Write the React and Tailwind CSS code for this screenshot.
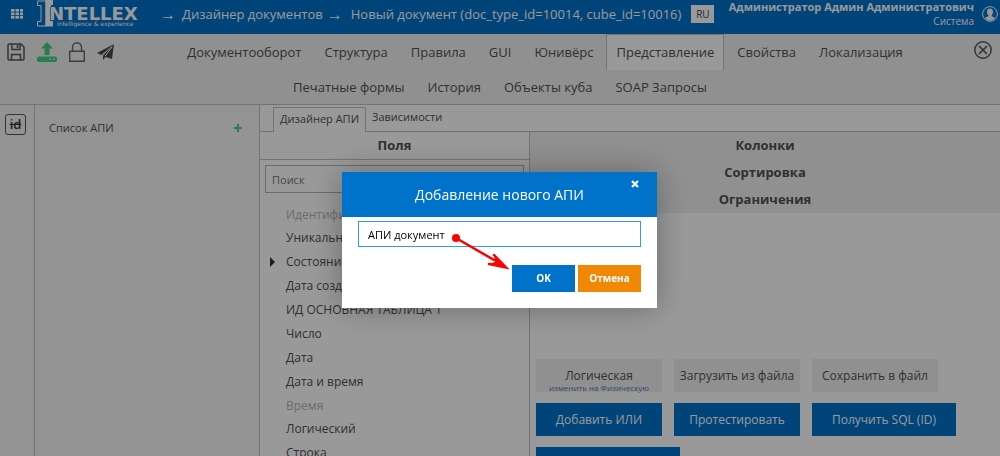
import React, { useState } from 'react';

const mainTabs = ['Документооборот', 'Структура', 'Правила', 'GUI', 'Юнивёрс', 'Представление', 'Свойства', 'Локализация'];
const subTabs = ['Печатные формы', 'История', 'Объекты куба', 'SOAP Запросы'];

const fields = [
    { name: 'Идентификатор', disabled: true },
    { name: 'Уникальный идентификатор' },
    { name: 'Состояние', expandable: true },
    { name: 'Дата создания' },
    { name: 'ИД ОСНОВНАЯ ТАБЛИЦА 1' },
    { name: 'Число' },
    { name: 'Дата' },
    { name: 'Дата и время' },
    { name: 'Время', disabled: true },
    { name: 'Логический' },
    { name: 'Строка' }
];

const sections = ['Колонки', 'Сортировка', 'Ограничения'];

function Logo() {
    return (
        <svg width="104" height="28" viewBox="0 0 104 28" role="img" aria-label="Intellex">
            <path d="M1.500 1h8.500v25H1.500v-4.500h3.500v-16H1.500z" fill="#0072ca" stroke="#fff" />
            <path d="M9.500 0H17v5h-2v2h-1v14h3v5.500H9.500z" fill="#fff" />
            <text x="13" y="20" fontSize="18" fontWeight="700" fill="#fff" fontFamily="'DejaVu Sans', sans-serif">NTELLEX</text>
            <text x="21" y="26" fontSize="6" fill="#fff" fontFamily="'DejaVu Sans', sans-serif">intelligence &amp; experience</text>
        </svg>
    );
}

function SaveIcon() {
    return (
        <svg width="18" height="18" viewBox="0 0 18 18" fill="none" stroke="#555" strokeWidth="1.5">
            <path d="M1 2.500Q1 1 2.500 1H14l3 3v11.500q0 1.500-1.500 1.500h-13Q1 17 1 15.500z" />
            <path d="M5 1v5.500h8V1M4.500 17v-5.500h9V17" />
            <path d="M10.500 2v3" />
        </svg>
    );
}

function UploadIcon() {
    return (
        <svg width="20" height="20" viewBox="0 0 20 20" fill="#43cf83">
            <path d="M10 0l6 6.500h-3.500V13h-5V6.500H4z" />
            <path fillRule="evenodd" d="M2.500 14.500h15a2.500 2.500 0 0 1 0 5.500h-15a2.500 2.500 0 0 1 0-5.500zM12.500 16.500v1.500H14v-1.500zM16 16.500v1.500h1.500v-1.500z" />
        </svg>
    );
}

function LockIcon() {
    return (
        <svg width="16" height="20" viewBox="0 0 16 20" fill="none" stroke="#666" strokeWidth="1.400">
            <path d="M.7 9.200h14.600v10.100H.7z" />
            <path d="M3.500 9V5.200a4.500 4.500 0 0 1 9 0V9" />
        </svg>
    );
}

function PlaneIcon() {
    return (
        <svg width="18" height="16" viewBox="0 0 18 16" fill="#4a4a4a">
            <path d="M17 0L0 9l4.500 2z" />
            <path d="M17 0L6 11.500V16l2.500-3 6.500 2z" />
            <path d="M15 3L8 12.200" stroke="#f0f0f0" strokeWidth="1" />
        </svg>
    );
}

function CloseCircleIcon() {
    return (
        <svg width="18" height="18" viewBox="0 0 18 18" fill="none" stroke="#555" strokeWidth="1.400">
            <circle cx="9" cy="9" r="8.200" />
            <path d="M5 5l8 8M13 5l-8 8" strokeWidth="1.700" />
        </svg>
    );
}

function UserIcon() {
    return (
        <svg width="16" height="16" viewBox="0 0 16 16">
            <circle cx="8" cy="8" r="7.400" fill="none" stroke="#fff" />
            <path d="M8 2.500c2 0 3 1.300 3 3.200 0 1.500-.6 2.600-1.300 3.300v1.200l3.300 1.500c-1 2-3 3-5 3s-4-1-5-3l3.300-1.500V9C5.600 8.300 5 7.200 5 5.700c0-1.900 1-3.200 3-3.200z" fill="#fff" />
        </svg>
    );
}

function Tab({ children, active }) {
    return (
        <button className={`px-[9px] border border-b-0 ${active ? 'bg-white border-[#c0c0c0]' : 'border-transparent'}`}>
            {children}
        </button>
    );
}

function TopBar() {
    return (
        <header className="h-[34px] shrink-0 bg-[#0072ca] text-white flex items-start pl-[11px] pr-[2px]">
            <button aria-label="Меню" className="mt-[9px] shrink-0">
                <svg width="12" height="10" viewBox="0 0 12 10" fill="#fff">
                    {[0, 1, 2].map((row) =>
                        [0, 1, 2].map((col) => <rect key={`${row}${col}`} x={col * 4.5} y={row * 3.5} width="3.500" height="2.700" />)
                    )}
                </svg>
            </button>
            <div className="ml-[13px] shrink-0"><Logo /></div>
            <nav className="ml-5 flex text-[13px] leading-[28px] whitespace-nowrap">
                <span className="w-[22px] text-[16px] leading-[28px]">→</span>
                <a href="#designer">Дизайнер документов</a>
                <span className="ml-1 w-[24px] text-[16px] leading-[28px]">→</span>
                <a href="#document">Новый документ (doc_type_id=10014, cube_id=10016)</a>
            </nav>
            <button className="ml-[10px] mt-[5px] w-[23px] h-[18px] shrink-0 bg-white text-[#444] text-[10px]">RU</button>
            <div className="ml-auto text-right whitespace-nowrap">
                <div className="text-[11px] leading-[14px] font-bold">Администратор Админ Администратович</div>
                <div className="text-[10px] leading-[15px]">Система</div>
            </div>
            <button aria-label="Профиль" className="ml-2 mt-[6px] shrink-0"><UserIcon /></button>
        </header>
    );
}

function Toolbar() {
    return (
        <div className="shrink-0 bg-[#f0f0f0] border-b border-[#c0c0c0] text-[13px] whitespace-nowrap">
            <div className="flex h-9">
                <div className="flex items-center w-[122px] pl-[7px] gap-3 shrink-0">
                    <button aria-label="Сохранить"><SaveIcon /></button>
                    <button aria-label="Загрузить"><UploadIcon /></button>
                    <button aria-label="Заблокировать"><LockIcon /></button>
                    <button aria-label="Отправить"><PlaneIcon /></button>
                </div>
                <nav className="flex-1 flex justify-center gap-[3px]">
                    {mainTabs.map((tab) => (
                        <Tab key={tab} active={tab === 'Представление'}>{tab}</Tab>
                    ))}
                </nav>
                <button aria-label="Закрыть" className="w-[32px] pl-[6px] pb-1"><CloseCircleIcon /></button>
            </div>
            <nav className="flex justify-center gap-[3px] h-[34px]">
                {subTabs.map((tab) => <Tab key={tab}>{tab}</Tab>)}
            </nav>
        </div>
    );
}

function FieldsColumn() {
    return (
        <section className="w-[270px] shrink-0 border-r border-[#c0c0c0]">
            <h2 className="text-center font-bold text-[13px] leading-[27px] border-b border-[#c0c0c0]">Поля</h2>
            <div className="pt-[5px] px-[5px]">
                <input
                    type="text"
                    aria-label="Поиск"
                    placeholder="Поиск"
                    className="w-full h-7 border border-[#b4b4b4] bg-white px-[6px] text-[11px] placeholder:text-[#777]"
                />
            </div>
            <ul className="mt-[10px] pl-[10px] text-[12px]">
                {fields.map((field) => (
                    <li
                        key={field.name}
                        className={`flex items-center whitespace-nowrap ${field.disabled ? 'h-[23px] text-[#b5b5b5]' : 'h-6'}`}
                    >
                        <span className="w-4 shrink-0">
                            {field.expandable && (
                                <svg width="5" height="10" viewBox="0 0 5 10" fill="#333"><path d="M0 0l5 5-5 5z" /></svg>
                            )}
                        </span>
                        {field.name}
                    </li>
                ))}
            </ul>
        </section>
    );
}

function QueryColumn() {
    return (
        <section className="flex-1 flex flex-col">
            <div className="bg-[#f0f0f0] text-center font-bold text-[13px] leading-[27px]">
                {sections.map((section) => <h2 key={section}>{section}</h2>)}
            </div>
            <div className="mt-[146px] ml-[6px] flex flex-col gap-[11px] text-[12px] whitespace-nowrap">
                <div className="flex gap-3">
                    <button className="w-[126px] h-[33px] bg-[#f0f0f0] flex flex-col items-center justify-end">
                        <span className="leading-[14px]">Логическая</span>
                        <span className="text-[8px] leading-[9px] text-[#5079b5]">изменить на Физическую</span>
                    </button>
                    <button className="w-[126px] h-[33px] bg-[#f0f0f0]">Загрузить из файла</button>
                    <button className="w-[126px] h-[33px] bg-[#f0f0f0]">Сохранить в файл</button>
                </div>
                <div className="flex gap-3 text-white">
                    <button className="w-[126px] h-[33px] bg-[#0072ca]">Добавить ИЛИ</button>
                    <button className="w-[126px] h-[33px] bg-[#0072ca]">Протестировать</button>
                    <button className="w-[144px] h-[33px] bg-[#0072ca]">Получить SQL (ID)</button>
                </div>
                <button aria-label="Получить SQL" className="w-[144px] h-[33px] bg-[#0072ca]" />
            </div>
        </section>
    );
}

function AddApiDialog() {
    const [name, setName] = useState('АПИ документ');

    return (
        <div className="fixed inset-0 bg-black/40 flex justify-center items-start pt-[172px] pr-px">
            <div role="dialog" aria-labelledby="dialog-title" className="relative w-[315px] bg-white shadow-[0_0_30px_rgba(0,0,0,0.3)]">
                <div className="bg-[#0072ca] text-white h-[45px] flex items-center justify-center">
                    <h1 id="dialog-title" className="text-[14px]">Добавление нового АПИ</h1>
                    <button aria-label="Закрыть окно" className="absolute right-[18px] top-2">
                        <svg width="8" height="8" viewBox="0 0 8 8" stroke="#fff" strokeWidth="2.200"><path d="M1 1l6 6M7 1L1 7" /></svg>
                    </button>
                </div>
                <div className="px-4 pt-1 pb-4">
                    <input
                        type="text"
                        aria-label="Название АПИ"
                        value={name}
                        onChange={(e) => setName(e.target.value)}
                        className="block w-full h-[26px] border border-[#3399f3] px-[9px] text-[11px] text-black outline-none"
                    />
                    <div className="mt-[18px] flex justify-end gap-[3px] text-white text-[10px] font-bold">
                        <button className="w-[63px] h-[27px] bg-[#0072ca]">OK</button>
                        <button className="w-[63px] h-[27px] bg-[#f28705]">Отмена</button>
                    </div>
                </div>
                <svg className="absolute left-[108px] top-[60px] pointer-events-none" width="60" height="42" viewBox="0 0 60 42" fill="none" stroke="#f00" strokeLinecap="round">
                    <circle cx="6" cy="6" r="4" fill="#f00" stroke="none" />
                    <path d="M6 6l38 22" strokeWidth="2.500" />
                    <path d="M44 23l12 12.500L39 32" strokeWidth="2.500" />
                    <path d="M44 23l12 12.500L39 32l6-2z" fill="#f00" stroke="none" />
                </svg>
            </div>
        </div>
    );
}

export default function App() {
    return (
        <div className="h-screen overflow-hidden flex flex-col bg-white text-[#505050] font-['Open_Sans',sans-serif]">
            <TopBar />
            <Toolbar />
            <main className="flex-1 min-h-0 flex">
                <aside className="w-[35px] shrink-0 bg-[#f5f5f5] border-r border-[#c0c0c0] pt-[6px] pl-[5px]">
                    <button className="w-[21px] h-[21px] border border-[#555] rounded-[3px] text-[#333] text-[13px] leading-[18px] font-semibold line-through">
                        id
                    </button>
                </aside>
                <aside className="w-[225px] shrink-0 bg-[#f5f5f5] border-r border-[#c0c0c0] pt-[13px] pl-[14px] pr-[17px]">
                    <div className="flex justify-between items-center text-[11px] leading-5">
                        <span>Список АПИ</span>
                        <button aria-label="Добавить АПИ">
                            <svg width="8" height="8" viewBox="0 0 8 8" stroke="#43cf83" strokeWidth="2"><path d="M4 0v8M0 4h8" /></svg>
                        </button>
                    </div>
                </aside>
                <div className="flex-1 min-w-0 flex flex-col">
                    <div className="h-[27px] shrink-0 flex items-end border-b border-[#c0c0c0] pl-[13px] text-[11px]">
                        <button className="h-[25px] -mb-px px-[6px] pb-[2px] border border-b-0 border-[#c0c0c0] bg-white">Дизайнер АПИ</button>
                        <button className="h-[25px] px-[6px] pb-[2px]">Зависимости</button>
                    </div>
                    <div className="flex-1 min-h-0 flex">
                        <FieldsColumn />
                        <QueryColumn />
                    </div>
                </div>
            </main>
            <AddApiDialog />
        </div>
    );
}
